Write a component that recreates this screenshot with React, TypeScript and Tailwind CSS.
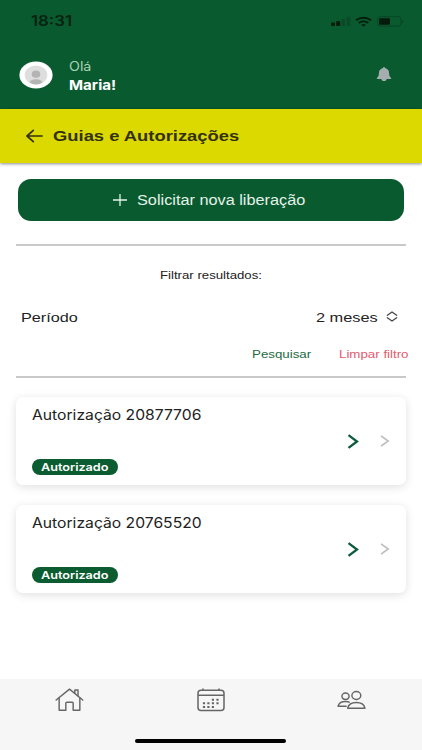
import * as React from 'react';
import { clsx } from 'clsx';

interface WideTextProps {
  readonly children: React.ReactNode;
  readonly className?: string;
}

// The brand face is an extended Helvetica, approximated by widening the glyphs.
function WideText(props: WideTextProps) {
  const { children, className } = props;
  return (
    <span className={ clsx('block origin-left whitespace-nowrap', className) }>
      { children }
    </span>
  );
}

function StatusBar() {
  return (
    <div className="flex h-[42px] items-center justify-between pl-[31px] pr-[18px] text-[#06230f]">
      <WideText className="w-[41px] scale-x-[1.2] text-[14px] font-semibold leading-none">18:31</WideText>
      <div className="flex items-center">
        <svg className="h-[10px] w-[20px]" viewBox="0 0 20 10">
          <rect x="0" y="6.5" width="4" height="3.5" rx="0.8" fill="#051c0c"/>
          <rect x="5.2" y="5" width="4" height="5" rx="0.8" fill="#051c0c"/>
          <rect x="10.5" y="3" width="3.6" height="7" rx="0.8" fill="#0a4a27"/>
          <rect x="15.8" y="0.8" width="3.6" height="9.2" rx="0.8" fill="#0a4a27"/>
        </svg>
        <svg className="ml-[4px] h-[11px] w-[17px]" viewBox="0 0 17 11" fill="none" stroke="#051c0c" strokeWidth="1.9">
          <path d="M1 4.2a10.8 8.6 0 0 1 15 0"/>
          <path d="M3.8 6.9a6.8 5.4 0 0 1 9.4 0"/>
          <path d="M8.5 10.6 6.2 8.8a3.3 2.4 0 0 1 4.6 0z" fill="#051c0c" stroke="none"/>
        </svg>
        <svg className="ml-[5px] h-[11px] w-[27px]" viewBox="0 0 27 11">
          <rect x="0.5" y="0.7" width="23.5" height="9.4" rx="2.4" fill="none" stroke="#084322" strokeWidth="0.9"/>
          <rect x="2" y="2.2" width="11" height="6.6" rx="1" fill="#041a0b"/>
          <path d="M25.2 3.8v3.2q1.3-.5 1.3-1.6t-1.3-1.6z" fill="#084322"/>
        </svg>
      </div>
    </div>
  );
}

function UserHeader() {
  return (
    <div className="flex h-[67px] items-center pl-[19px] pr-[30px] pb-0.5">
      <svg className="h-[28px] w-[34px]" viewBox="0 0 34 28">
        <ellipse cx="17" cy="14" rx="16.6" ry="13.6" fill="#fff"/>
        <ellipse cx="17" cy="14" rx="11.3" ry="9.6" fill="#dedede"/>
        <ellipse cx="17" cy="13.2" rx="4.3" ry="3.6" fill="#b4b4b4"/>
        <path d="M10.4 21.2q1.8-3 6.6-3t6.6 3q-2.8 2.2-6.6 2.2t-6.6-2.2z" fill="#b4b4b4"/>
      </svg>
      <div className="ml-[16px] mt-[3px] flex-1">
        <WideText className="w-[24px] scale-x-[1.14] text-[12.5px] leading-[18px] text-[#a8d3b4]">Olá</WideText>
        <WideText className="w-[48px] scale-x-[1.12] text-[13.5px] font-bold leading-[18px] text-white">Maria!</WideText>
      </div>
      <svg className="h-[15px] w-[16px]" viewBox="0 0 16 15" fill="#a6adae">
        <path d="M8 .3c.8 0 1.3.5 1.5 1 2.3.6 3.6 2.3 3.6 4.7 0 2.6.6 3.7 1.9 4.7.5.5.2 1.2-.6 1.2H1.600c-.8 0-1.100-.7-.6-1.200 1.300-1 1.900-2.100 1.900-4.700 0-2.400 1.300-4.100 3.600-4.700.2-.5.7-1 1.500-1z"/>
        <path d="M5.400 11.900h5.200c-.3 1.500-1.300 2.200-2.600 2.200s-2.300-.7-2.600-2.200z"/>
      </svg>
    </div>
  );
}

function TitleBar() {
  return (
    <div className="flex h-[54px] items-center bg-[#dbd900] pl-[26px] text-[#33310c] shadow-[0_1px_3px_rgba(0,0,0,0.45)]">
      <svg className="h-[14px] w-[17px]" viewBox="0 0 17 14" fill="none" stroke="currentColor" strokeWidth="1.7" strokeLinecap="round" strokeLinejoin="round">
        <path d="M16.2 7H1M7.3 1.3 1 7l6.300 5.700"/>
      </svg>
      <WideText className="ml-[10px] w-[150px] scale-x-[1.21] font-['Liberation_Sans'] text-[15.2px] font-bold leading-none">
        Guias e Autorizações
      </WideText>
    </div>
  );
}

function FilterSection() {
  return (
    <section className="ml-[15.5px] mr-[16.5px] mt-[23px] flex h-[134px] flex-col border-y-2 border-[#c9c9c9] font-['Liberation_Sans'] text-[#222]">
      <div className="mt-[21.5px] flex justify-center">
        <WideText className="w-[102px] scale-x-[1.2] text-[11px] leading-[14px]">Filtrar resultados:</WideText>
      </div>
      <div className="mt-[27px] flex items-center justify-between pl-[5.500px] pr-[8px]">
        <WideText className="scale-x-[1.2] text-[13.5px] leading-[18px]">Período</WideText>
        <div className="flex items-center">
          <WideText className="w-[70px] scale-x-[1.21] text-[13.5px] leading-[18px]">2 meses</WideText>
          <svg className="-mt-[2px] h-[11px] w-[12px]" viewBox="0 0 12 11" fill="none" stroke="#444" strokeWidth="1.2" strokeLinecap="round" strokeLinejoin="round">
            <path d="M1.300 4.300 6 .9l4.700 3.400M1.300 6.700 6 10.100l4.700-3.400"/>
          </svg>
        </div>
      </div>
      <div className="-mr-[3px] mt-[20.5px] flex justify-end">
        <WideText className="w-[87px] scale-x-[1.21] text-[11px] leading-[14px] text-[#1c6b41]">Pesquisar</WideText>
        <WideText className="w-[70px] scale-x-[1.21] text-[11px] leading-[14px] text-[#e25c6e]">Limpar filtro</WideText>
      </div>
    </section>
  );
}

interface AuthorizationCardProps {
  readonly number: string;
  readonly status: string;
}

function AuthorizationCard(props: AuthorizationCardProps) {
  const { number, status } = props;
  return (
    <article className="flex h-[88px] items-center justify-between rounded-[7px] bg-white pl-4 pr-[16px] shadow-[0_2px_10px_rgba(0,0,0,0.13)]">
      <div className="flex h-full flex-col justify-between pb-[10px] pt-[9px]">
        <WideText className="scale-x-[1.12] text-[14px] leading-[18px] text-[#222]">
          Autorização { number }
        </WideText>
        <span className="flex h-4 w-[86px] items-center rounded-full bg-[#0b5c30] pl-[8.500px] text-white">
          <WideText className="scale-x-[1.15] text-[11px] font-semibold leading-none">{ status }</WideText>
        </span>
      </div>
      <div className="flex items-center gap-[21px]">
        <svg className="h-[15px] w-[12px]" viewBox="0 0 12 15" fill="none" stroke="#0b5c3b" strokeWidth="2.3">
          <path d="M1.500 1.200 10 7.500l-8.500 6.300"/>
        </svg>
        <svg className="h-[12px] w-[10px]" viewBox="0 0 10 12" fill="none" stroke="#bdbdbd" strokeWidth="1.6">
          <path d="M1 .9 8.200 6 1 11.100"/>
        </svg>
      </div>
    </article>
  );
}

function TabBar() {
  return (
    <nav className="mt-auto flex h-[71px] flex-col items-center justify-between bg-[#f6f6f6] pb-[7px] pt-[9px]">
      <div className="flex w-full justify-between pl-[55px] pr-[56px] text-[#666]">
        <svg className="h-[24px] w-[29px]" viewBox="0 0 30 24" preserveAspectRatio="none" fill="none" stroke="currentColor" strokeWidth="1.5" strokeLinecap="round" strokeLinejoin="round">
          <path d="M1.200 12 15 1.200 28.700 12"/>
          <path d="M4.300 10v12.200h6.900v-6.900q0-1 1-1h5.600q1 0 1 1v6.900h6.900V10"/>
          <path d="M20.500 5.200V2h3.300v5.800"/>
        </svg>
        <svg className="h-[24px] w-[28px]" viewBox="0 0 28 24" fill="none" stroke="currentColor" strokeWidth="1.5">
          <rect x="1" y="2.200" width="26" height="20.300" rx="3"/>
          <path d="M1 7.200h26M6 .6v2M22 .6v2"/>
          <path d="M14.800 11.800h2.200M19.400 11.800h2.200M5.900 15.300h2.200M10.300 15.300h2.200M14.800 15.300h2.200M19.400 15.300h2.200M5.900 19h2.200M10.300 19h2.200M14.800 19h2.200" strokeWidth="2"/>
        </svg>
        <svg className="mt-[2px] h-[20px] w-[29px]" viewBox="0 0 30 20" preserveAspectRatio="none" fill="none" stroke="currentColor" strokeWidth="1.5" strokeLinejoin="round">
          <ellipse cx="8.800" cy="6.300" rx="3.700" ry="3.200"/>
          <ellipse cx="20" cy="5.500" rx="4.600" ry="3.900"/>
          <path d="M11 18.200h17.900q-1.200-5.700-8.900-5.700t-9 5.700z"/>
          <path d="M10 16.200H1.100q1.200-4.600 7.700-4.600 2.600 0 4.400.8"/>
        </svg>
      </div>
      <div className="mr-px h-1 w-[151px] rounded-full bg-black"/>
    </nav>
  );
}

export default function App() {
  return (
    <div className="flex h-[750px] w-[422px] flex-col overflow-hidden bg-white font-['Inter',sans-serif]">
      <header className="bg-[#0a5a30]">
        <StatusBar/>
        <UserHeader/>
        <TitleBar/>
      </header>
      <button className="ml-[17.5px] mt-[16px] flex h-[42px] w-[386px] shrink-0 items-center rounded-[13px] bg-[#0a5a30] pl-[95px] text-[#e3f3e8]">
        <svg className="h-[12px] w-[14px]" viewBox="0 0 14 12" fill="none" stroke="currentColor" strokeWidth="1.3">
          <path d="M7 0v12M0 6h14"/>
        </svg>
        <WideText className="ml-[10px] mt-[2px] scale-x-[1.18] font-['Liberation_Sans'] text-[13.8px] leading-none">
          Solicitar nova liberação
        </WideText>
      </button>
      <FilterSection/>
      <div className="mt-[19px] flex flex-col gap-[20px] px-4">
        <AuthorizationCard number="20877706" status="Autorizado"/>
        <AuthorizationCard number="20765520" status="Autorizado"/>
      </div>
      <TabBar/>
    </div>
  );
}
